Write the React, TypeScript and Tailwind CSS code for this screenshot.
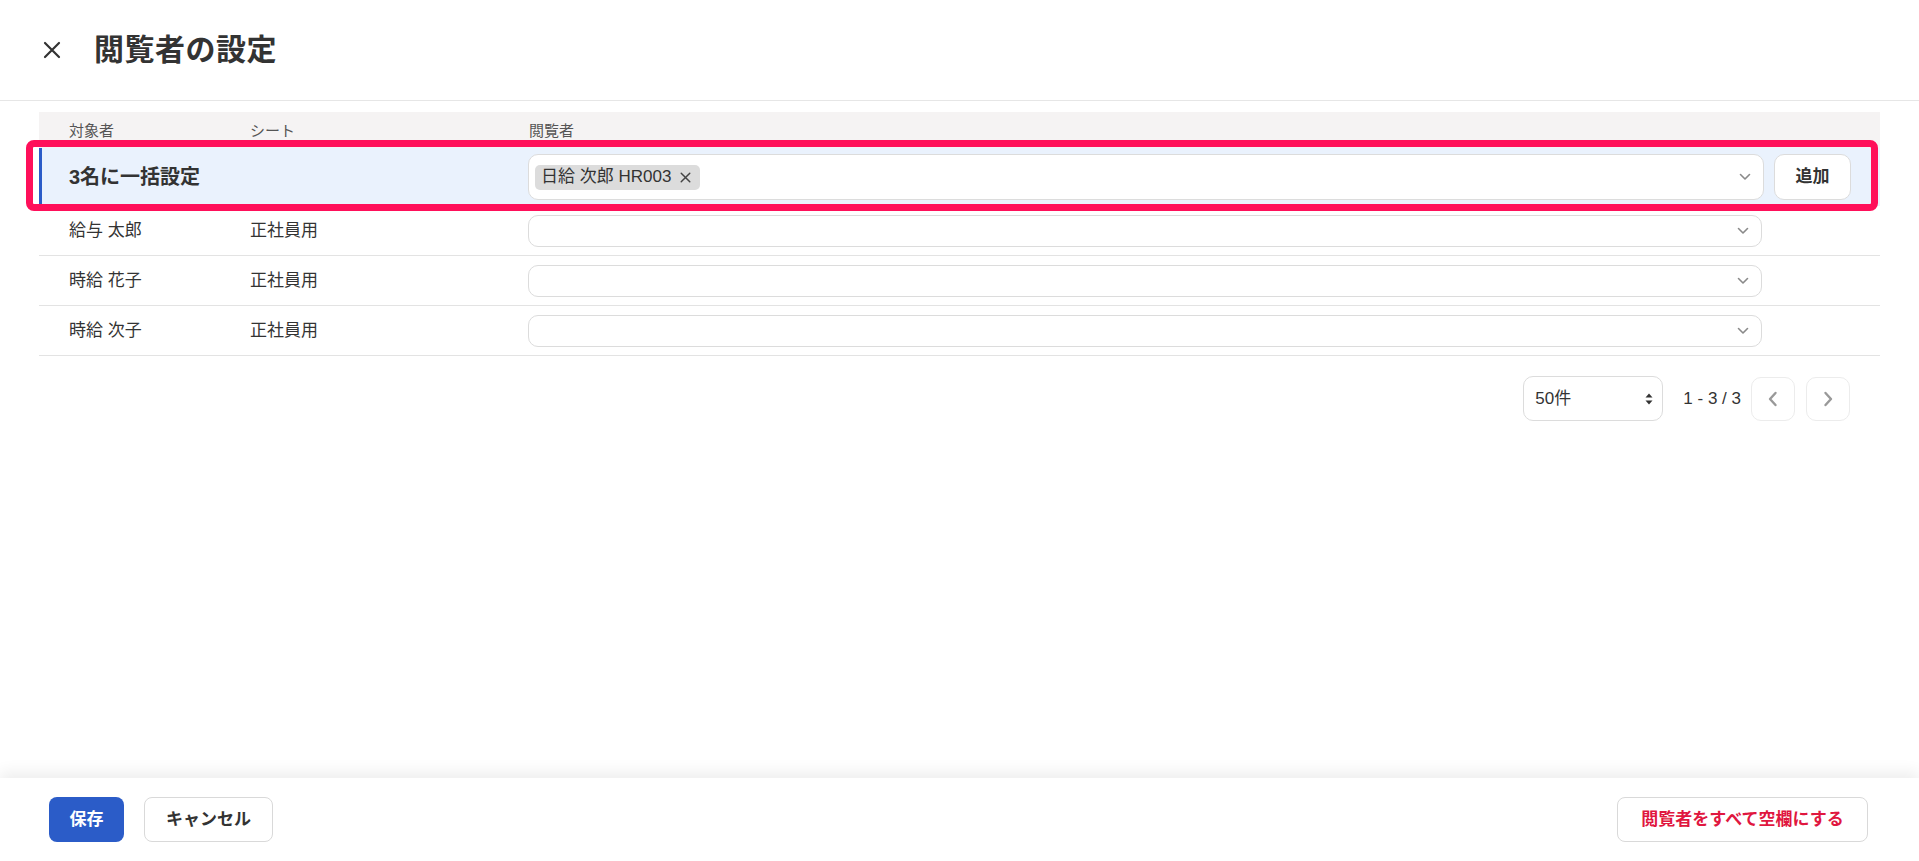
import React from "react";

const FONT = { fontFamily: '"Liberation Sans", "Noto Sans CJK JP", "Noto Sans", sans-serif' };

function ChevronDown() {
  return (
    <svg width="12" height="8" viewBox="0 0 12 8" fill="none">
      <path d="M1.5 1.5 L6 6 L10.5 1.5" stroke="#8a8a8a" strokeWidth="1.6" strokeLinecap="round" strokeLinejoin="round" />
    </svg>
  );
}

function CloseIcon({ size = 18, stroke = "#333", width = 2.2 }: { size?: number; stroke?: string; width?: number }) {
  return (
    <svg width={size} height={size} viewBox="0 0 18 18" fill="none">
      <path d="M2 2 L16 16 M16 2 L2 16" stroke={stroke} strokeWidth={width} strokeLinecap="round" />
    </svg>
  );
}

function ViewerSelect({ tall, children }: { tall?: boolean; children?: React.ReactNode }) {
  return (
    <div
      className={`flex w-full items-center justify-between rounded-[10px] border border-[#dcdcdc] bg-white pl-[6px] pr-[12px] ${
        tall ? "h-[46px]" : "h-[32px]"
      }`}
    >
      <div className="flex items-center gap-1">{children}</div>
      <ChevronDown />
    </div>
  );
}

const people = [
  { name: "給与 太郎", sheet: "正社員用" },
  { name: "時給 花子", sheet: "正社員用" },
  { name: "時給 次子", sheet: "正社員用" },
];

export default function App() {
  return (
    <div className="relative min-h-[861px] bg-white text-[#333]" style={FONT}>
      {/* title bar */}
      <header className="flex h-[101px] items-center border-b border-[#e6e6e6] pl-[43px]">
        <button className="flex h-[18px] w-[18px] items-center justify-center">
          <CloseIcon />
        </button>
        <h1 className="ml-[33px] text-[30px] font-bold leading-none tracking-[0.5px] text-[#333]">閲覧者の設定</h1>
      </header>

      <main className="px-[39px] pt-[11px]">
        {/* column heads */}
        <div className="flex h-[36px] items-start bg-[#f5f3f3] pt-[9px] text-[15px] leading-[20px] text-[#555]">
          <div className="w-[211px] pl-[30px]">対象者</div>
          <div className="w-[278px]">シート</div>
          <div className="flex-1 pl-[1px]">閲覧者</div>
        </div>

        {/* bulk setting row */}
        <div className="relative flex h-[58px] items-center border-l-[3px] border-[#2b5cc8] bg-[#eaf2fd]">
          <div className="w-[208px] pl-[27px] text-[20px] font-bold text-[#333]">3名に一括設定</div>
          <div className="w-[278px]" />
          <div className="flex flex-1 items-center">
            <ViewerSelect tall>
              <span className="flex h-[25px] items-center gap-[9px] rounded-[5px] bg-[#dcdcdc] pl-[6px] pr-[9px] text-[17px] text-[#333]">
                日給 次郎 HR003
                <CloseIcon size={11} stroke="#444" width={2.4} />
              </span>
            </ViewerSelect>
            <button className="ml-[10px] mr-[29px] h-[46px] w-[77px] shrink-0 rounded-[10px] border border-[#dcdcdc] bg-white text-[17px] font-bold text-[#333]">
              追加
            </button>
          </div>
          <div className="pointer-events-none absolute bottom-[-5px] left-[-16px] right-[2px] top-[-8px] rounded-[8px] border-[7px] border-[#ff0f5a]" />
        </div>

        {/* employees */}
        {people.map((p) => (
          <div key={p.name} className="flex h-[50px] items-center border-b border-[#e3e3e3] text-[17px] text-[#333]">
            <div className="w-[211px] pl-[30px]">{p.name}</div>
            <div className="w-[278px]">{p.sheet}</div>
            <div className="flex flex-1 items-center pr-[118px]">
              <ViewerSelect />
            </div>
          </div>
        ))}

        {/* paging */}
        <div className="mt-[20px] flex items-center justify-end pr-[30px]">
          <div className="flex h-[45px] w-[140px] items-center justify-between rounded-[10px] border border-[#dcdcdc] bg-white pl-[11px] pr-[9px] text-[17px] text-[#333]">
            <span>50件</span>
            <svg width="8" height="12" viewBox="0 0 8 12">
              <path d="M4 0.5 L7.5 4.5 H0.5 Z" fill="#333" />
              <path d="M4 11.5 L7.5 7.5 H0.5 Z" fill="#333" />
            </svg>
          </div>
          <span className="ml-[20px] text-[17px] text-[#333]">1 - 3 / 3</span>
          <button className="ml-[10px] flex h-[44px] w-[44px] items-center justify-center rounded-[10px] border border-[#ececec] bg-white">
            <svg width="10" height="16" viewBox="0 0 10 16" fill="none">
              <path d="M7.5 2 L2 8 L7.5 14" stroke="#999" strokeWidth="2.4" strokeLinecap="round" strokeLinejoin="round" />
            </svg>
          </button>
          <button className="ml-[11px] flex h-[44px] w-[44px] items-center justify-center rounded-[10px] border border-[#ececec] bg-white">
            <svg width="10" height="16" viewBox="0 0 10 16" fill="none">
              <path d="M2.5 2 L8 8 L2.5 14" stroke="#999" strokeWidth="2.4" strokeLinecap="round" strokeLinejoin="round" />
            </svg>
          </button>
        </div>
      </main>

      {/* action bar */}
      <footer className="absolute bottom-0 left-0 right-0 flex h-[83px] items-center justify-between bg-white pl-[49px] pr-[51px] shadow-[0_-6px_14px_rgba(0,0,0,0.07)]">
        <div className="flex items-center gap-[20px]">
          <button className="h-[45px] w-[75px] rounded-[8px] bg-[#2b5cc8] text-[17px] font-bold text-white">保存</button>
          <button className="h-[45px] w-[129px] rounded-[8px] border border-[#d9d9d9] bg-white text-[17px] font-bold text-[#333]">
            キャンセル
          </button>
        </div>
        <button className="h-[45px] w-[251px] rounded-[8px] border border-[#d9d9d9] bg-white text-[17px] font-bold text-[#e0173f]">
          閲覧者をすべて空欄にする
        </button>
      </footer>
    </div>
  );
}
